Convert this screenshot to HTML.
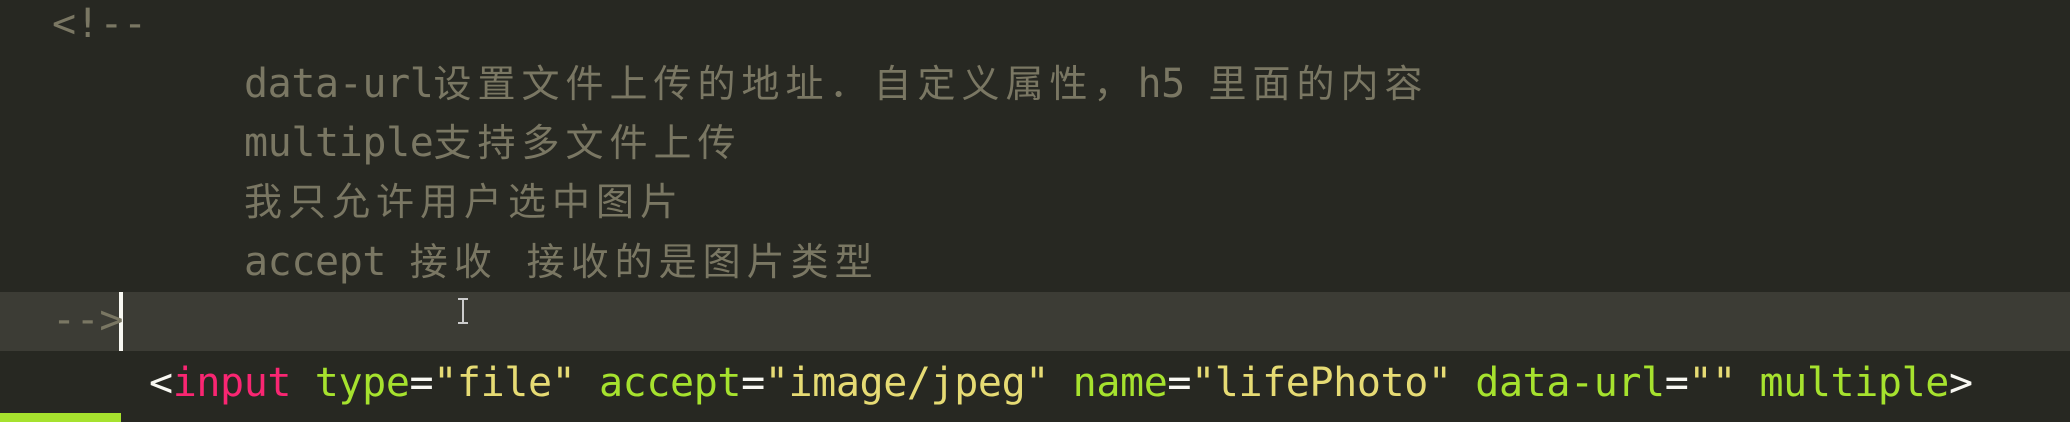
<!DOCTYPE html>
<html><head><meta charset="utf-8"><style>
html,body{margin:0;padding:0;width:2070px;height:422px;overflow:hidden;background:#272822;}
.l{position:absolute;white-space:pre;font-family:"DejaVu Sans Mono","Liberation Mono","Noto Sans CJK SC",monospace;line-height:40px;}
.a{font-size:40px;letter-spacing:-0.4px;}
.c{font-size:38px;letter-spacing:6px;}
.cm{color:#7a7763;}
.w{color:#f8f8f2}.r{color:#f92672}.g{color:#a6e22e}.y{color:#e6db74}
</style></head><body>
<div style="position:absolute;left:0;top:292px;width:2070px;height:59px;background:#3c3c35;"></div>
<div style="position:absolute;left:119px;top:292px;width:4px;height:59px;background:#f8f8f2;"></div>
<div class="l cm a" style="left:52px;top:4px;">&lt;!--</div>
<div class="l cm" style="left:244px;top:64px;"><span class="a">data-url</span><span class="c">设置文件上传的地址．自定义属性，</span><span class="a">h5 </span><span class="c">里面的内容</span></div>
<div class="l cm" style="left:244px;top:123px;"><span class="a">multiple</span><span class="c">支持多文件上传</span></div>
<div class="l cm" style="left:244px;top:182px;"><span class="c">我只允许用户选中图片</span></div>
<div class="l cm" style="left:244px;top:242px;"><span class="a">accept </span><span class="c">接收 接收的是图片类型</span></div>
<div class="l cm a" style="left:52px;top:300px;">--&gt;</div>
<div style="position:absolute;left:458px;top:298px;width:10px;height:26px;border-top:2px solid #ccc;border-bottom:2px solid #ccc;box-sizing:border-box;"></div>
<div style="position:absolute;left:462px;top:298px;width:2px;height:26px;background:#ccc;"></div>
<div class="l a" style="left:149px;top:363px;"><span class="w">&lt;</span><span class="r">input</span> <span class="g">type</span><span class="w">=</span><span class="y">"file"</span> <span class="g">accept</span><span class="w">=</span><span class="y">"image/jpeg"</span> <span class="g">name</span><span class="w">=</span><span class="y">"lifePhoto"</span> <span class="g">data-url</span><span class="w">=</span><span class="y">""</span> <span class="g">multiple</span><span class="w">&gt;</span></div>
<div style="position:absolute;left:0;top:413px;width:121px;height:9px;background:#a6e22e;"></div>
</body></html>
